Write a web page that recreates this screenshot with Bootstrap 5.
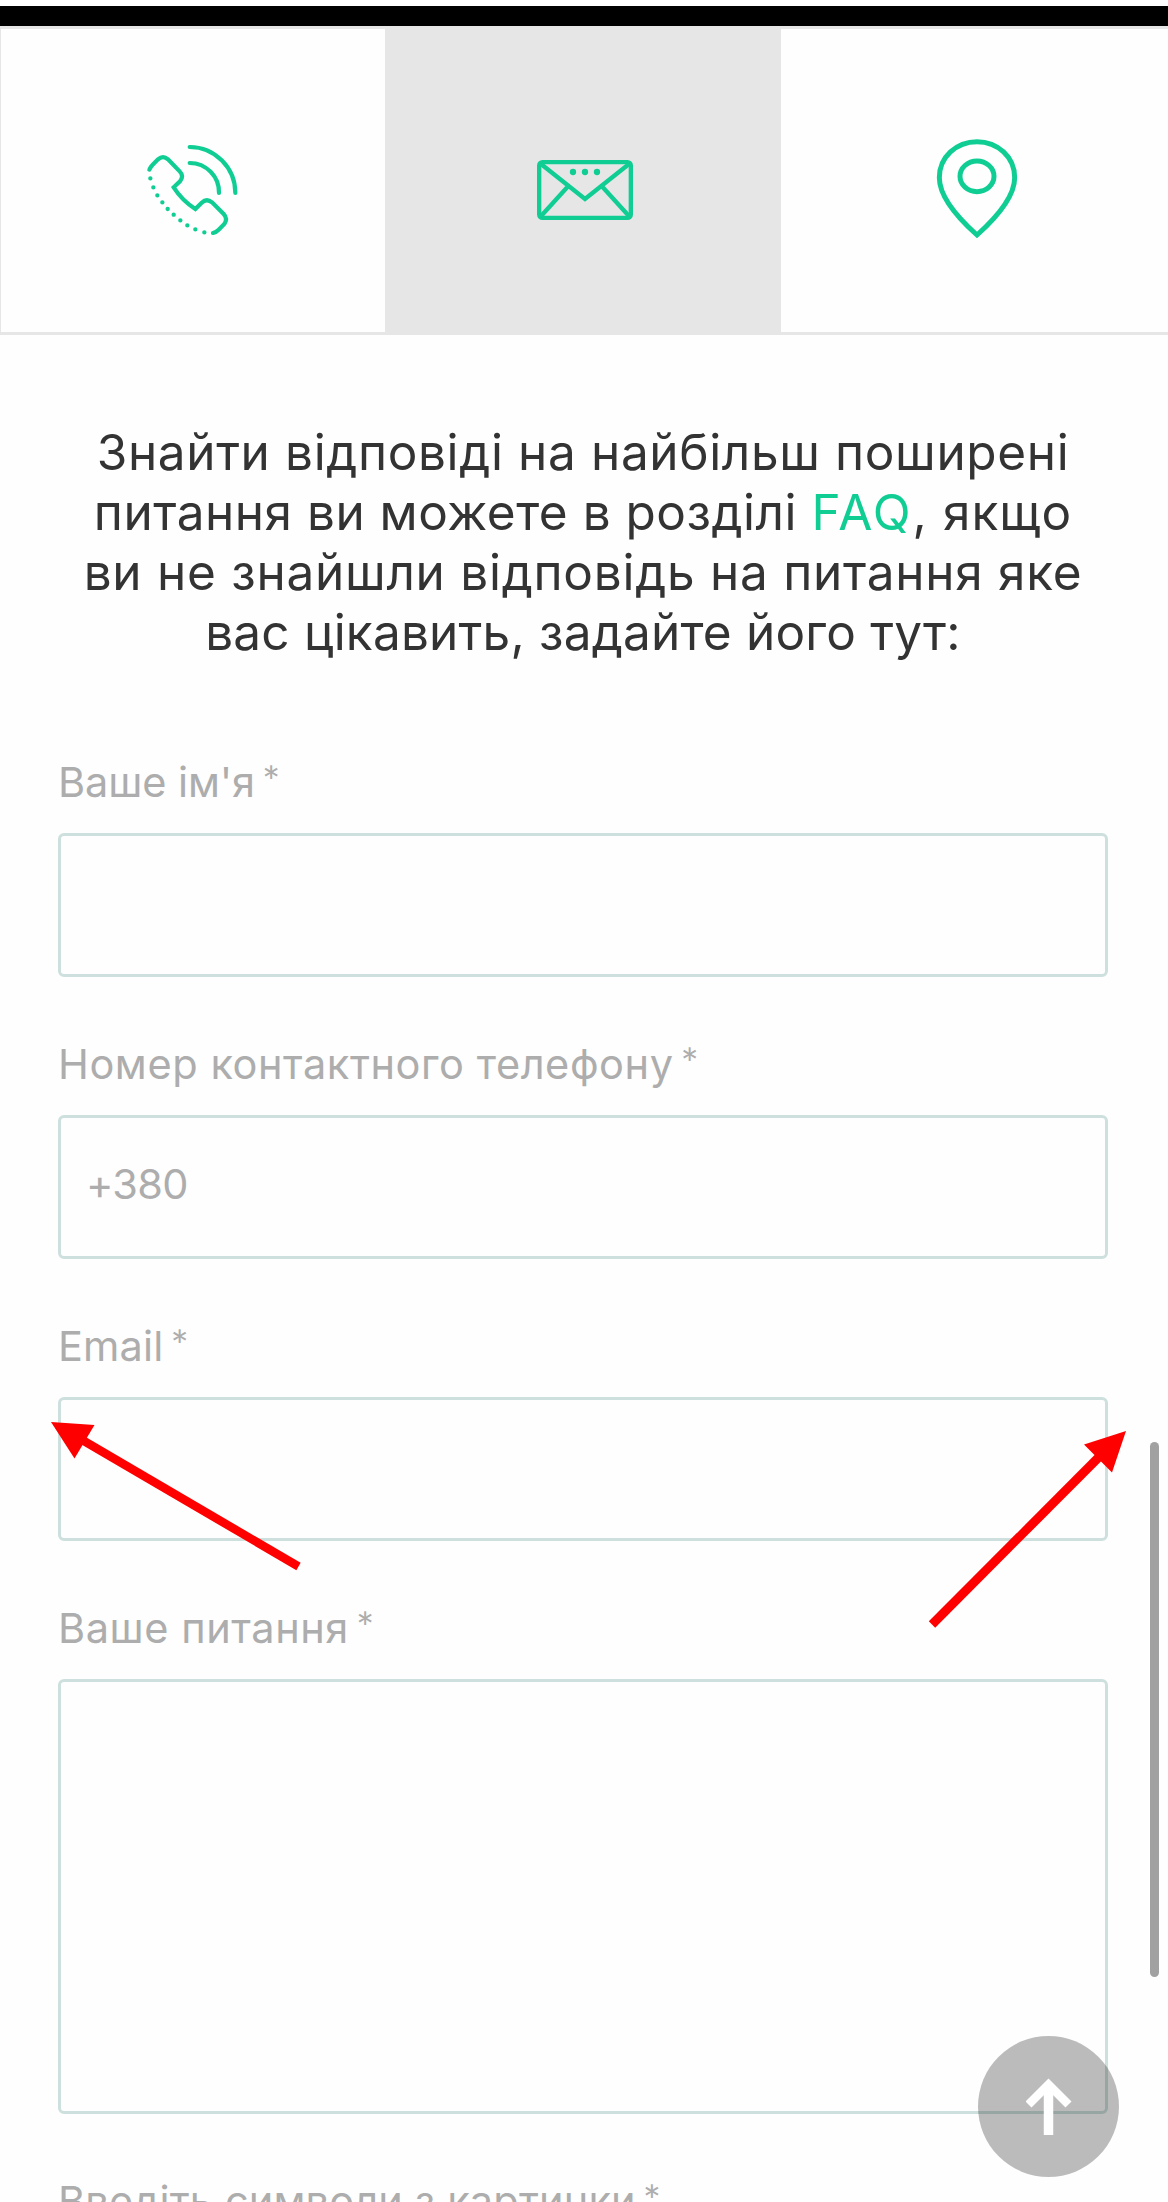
<!DOCTYPE html>
<html lang="uk">
<head>
<meta charset="utf-8">
<meta name="viewport" content="width=device-width, initial-scale=1">
<title>Контакти</title>
<link href="https://cdn.jsdelivr.net/npm/bootstrap@5.3.0/dist/css/bootstrap.min.css" rel="stylesheet">
<style>
  html, body { height: 2202px; overflow: hidden; }
  body { font-family: Inter, "Open Sans", sans-serif; background: #fefefe; color: #333; }
  .top-strip { height: 26px; background: #000; border-top: 6px solid #fefefe; }
  .contact-tabs { height: 309px; border: solid #e6e6e6; border-width: 3px 0 3px 1px; }
  .contact-tabs .nav-link { padding: 0; border-radius: 0; background: #fefefe; color: #10cd93; }
  .contact-tabs .nav-link.active { background: #e6e6e6; color: #10cd93; }
  .tab-side { width: 384px; }
  .tab-mid { width: 396px; }
  .contact-tabs svg { fill: none; stroke: currentColor; }
  .icon-phone { margin: 18px 0 0 4px; }
  .icon-mail { margin: 18px 0 0 4px; }
  .icon-pin { margin: 16px 0 0 5px; }
  .page-body { padding: 87px 60px 0 58px; }
  .intro { font-size: 49.5px; line-height: 60px; margin: 0 -20px 95px; white-space: nowrap; letter-spacing: .63px; }
  .intro a { color: #10cd93; letter-spacing: 2px; }
  .ls-a { letter-spacing: .5px; }
  .ls-b { letter-spacing: 1.1px; }
  .ls-c { letter-spacing: .73px; }
  .ls-d { letter-spacing: .2px; }
  .field-label { display: block; height: 50px; line-height: 50px; margin: 0 0 26px; font-size: 41.5px; color: #adadad; white-space: nowrap; letter-spacing: .15px; }
  .field-label.wide { letter-spacing: .57px; }
  .field-label.tight { letter-spacing: -.1px; }
  .req { font-family: Lato, sans-serif; font-size: 43px; line-height: 1; letter-spacing: 0; margin-left: 7px; }
  .field-box.form-control { height: 144px; border: 3px solid #cde0dd; border-radius: 6px; background: #fefefe; padding: 0 25px 6px; font-size: 41.5px; margin-bottom: 62px; resize: none; letter-spacing: -.7px; }
  .field-box::placeholder { color: #adadad; opacity: 1; }
  textarea.field-box.form-control { height: 435px; }
  .marks { left: 0; top: 0; z-index: 3; pointer-events: none; }
  .scroll-thumb { left: 1150px; top: 1442px; width: 9px; height: 535px; border-radius: 5px; background: #a1a1a1; }
  .to-top { left: 978px; top: 2036px; width: 141px; height: 141px; background: rgba(0,0,0,.263); z-index: 2; border: 0; }
</style>
<script src="https://cdn.jsdelivr.net/npm/bootstrap@5.3.0/dist/js/bootstrap.bundle.min.js"></script>
</head>
<body class="position-relative">
<div class="top-strip"></div>
<nav class="nav contact-tabs d-flex flex-nowrap">
  <a class="nav-link tab-side d-flex align-items-center justify-content-center" href="#" aria-label="Телефон">
    <svg class="icon-phone" width="130" height="120" viewBox="0 0 390 360" stroke-width="12.500" stroke-linecap="round" stroke-linejoin="miter">
      <path d="M179 51A138 138 0 0 1 316 189M179 99A88 88 0 0 1 267 189"/>
      <path d="M58 119Q61 111 68 104L84 88Q99 75 114 88L149 124Q163 138 150 154L131 172Q156 211 196 237L215 218Q230 204 246 217L281 252Q294 266 283 282L266 299Q258 307 249 309"/>
      <path d="M61 145h.1M70 172h.1M82 196h.1M97 217h.1M113 237h.1M131 254h.1M151 271h.1M172 286h.1M196 298h.1M223 307h.1" stroke-width="13"/>
    </svg>
  </a>
  <a class="nav-link active tab-mid d-flex align-items-center justify-content-center" href="#" aria-label="Email">
    <svg class="icon-mail" width="96" height="60" viewBox="0 0 288 180" stroke-width="13">
      <rect x="6.500" y="6.500" width="275" height="167" rx="10"/>
      <path d="M12 12L144 117L276 12M94 78L13 167M194 78L275 167"/>
      <g fill="currentColor" stroke="none"><circle cx="108" cy="36" r="9.500"/><circle cx="144" cy="36" r="9.500"/><circle cx="180" cy="36" r="9.500"/></g>
    </svg>
  </a>
  <a class="nav-link flex-fill d-flex align-items-center justify-content-center" href="#" aria-label="Адреса">
    <svg class="icon-pin" width="82" height="100" viewBox="0 0 246 300" stroke-width="15">
      <path d="M123 288C63 234 10 170 10 116C10 54 61 8 123 8C185 8 236 54 236 116C236 170 183 234 123 288Z"/>
      <ellipse cx="123" cy="112" rx="51" ry="46"/>
    </svg>
  </a>
</nav>

<main class="page-body">
  <p class="intro text-center">Знайти відповіді на найбільш поширені<br><span class="ls-a">питання ви можете в розділі </span><a class="text-decoration-none" href="#">FAQ</a><span class="ls-b">, якщо</span><br><span class="ls-c">ви не знайшли відповідь на питання яке</span><br><span class="ls-d">вас цікавить, задайте його тут:</span></p>
  <form>
    <label class="field-label tight" for="f-name">Ваше ім'я<span class="req">*</span></label>
    <input class="form-control field-box" id="f-name" type="text">
    <label class="field-label wide" for="f-phone">Номер контактного телефону<span class="req">*</span></label>
    <input class="form-control field-box" id="f-phone" type="tel" placeholder="+380">
    <label class="field-label" for="f-mail">Email<span class="req">*</span></label>
    <input class="form-control field-box" id="f-mail" type="text">
    <label class="field-label wide" for="f-text">Ваше питання<span class="req">*</span></label>
    <textarea class="form-control field-box" id="f-text"></textarea>
    <label class="field-label">Введіть символи з картинки<span class="req">*</span></label>
  </form>
</main>

<div class="scroll-thumb position-absolute"></div>
<button class="to-top position-absolute rounded-circle p-0 d-flex align-items-center justify-content-center" type="button" aria-label="Нагору">
  <svg width="46" height="58" viewBox="0 0 46 58" fill="none" stroke="#fff"><path d="M22.500 57V8" stroke-width="9.500"/><path d="M2.500 26.500L22.500 6.500L42.500 26.500" stroke-width="8.500"/></svg>
</button>
<svg class="marks position-absolute" width="1168" height="2202" viewBox="0 0 1168 2202" fill="#f00" stroke="#f00">
  <path d="M84 1441L298.500 1566.500" stroke-width="8.500"/>
  <path d="M51 1422L94.500 1425L74.500 1458.500Z" stroke="none"/>
  <path d="M1100 1456L932 1624.500" stroke-width="9"/>
  <path d="M1126 1431L1084 1444.500L1112 1472.500Z" stroke="none"/>
</svg>
</body>
</html>
